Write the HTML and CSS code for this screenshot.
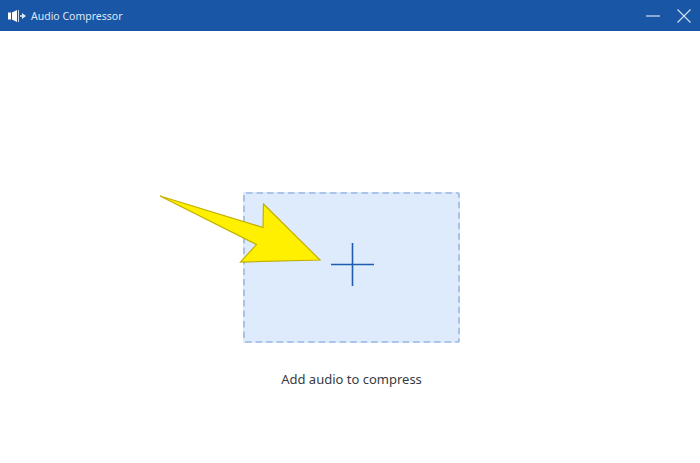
FILE: index.html
```html
<!DOCTYPE html>
<html>
<head>
    <title>Audio Compressor</title>
    <meta charset="UTF-8">
    <link rel="stylesheet" href="styles.css">
</head>
<body>
    <!-- Title bar -->
    <div class="title-bar">
        <svg class="app-icon" width="18" height="14" viewBox="0 0 18 14">
            <rect x="0" y="3.5" width="3" height="7" fill="#fff"/>
            <path d="M4 3.5 L9 1 L9 13 L4 10.5 Z" fill="#fff"/>
            <rect x="10" y="1" width="1" height="12" fill="#cfdcf0"/>
            <path d="M12 6.2 H14 V4 L18 7 L14 10 V7.8 H12 Z" fill="#dfe8f5"/>
        </svg>
        <span class="app-title">Audio Compressor</span>
        <div class="window-buttons">
            <svg width="14" height="14" viewBox="0 0 14 14">
                <path d="M0 7 H14" stroke="#b9cdea" stroke-width="1.4"/>
            </svg>
            <svg width="14" height="14" viewBox="0 0 14 14">
                <path d="M0.5 0.5 L13.5 13.5 M13.5 0.5 L0.5 13.5" stroke="#d5e1f2" stroke-width="1.1"/>
            </svg>
        </div>
    </div>

    <!-- Main area -->
    <div class="main">
        <div class="drop-zone">
            <svg class="dash-border" width="217" height="151" viewBox="0 0 217 151">
                <rect x="1" y="1" width="215" height="149" rx="2" fill="none" stroke="#9db8e2" stroke-width="1.6" stroke-dasharray="6.5 4"/>
            </svg>
            <svg class="plus" width="43" height="43" viewBox="0 0 43 43">
                <path d="M0 21.5 H43 M21.5 0 V43" stroke="#1f5cae" stroke-width="1.6"/>
            </svg>
        </div>
        <p class="add-label">Add audio to compress</p>
    </div>

    <!-- Arrow drawn over the page -->
    <svg class="arrow" width="700" height="463" viewBox="0 0 700 463">
        <path d="M160 196 L263 227.5 L263.5 204 L320 260 L240.5 262 L256.5 244.5 Z" fill="#fff000" stroke="#c4b000" stroke-width="1.2"/>
    </svg>
</body>
</html>
```

FILE: styles.css
```css
html, body {
    margin: 0;
    height: 463px;
    overflow: hidden;
    background: #fff;
    font-family: "Noto Sans", Tahoma, sans-serif;
}
.title-bar {
    display: flex;
    align-items: center;
    height: 31px;
    padding: 0 9px 0 8px;
    background: #1a56a6;
    color: #dde7f5;
    box-sizing: border-box;
}
.app-icon {
    margin-right: 5px;
}
.app-title {
    font-size: 10.5px;
}
.window-buttons {
    display: flex;
    gap: 17px;
    margin-left: auto;
}
.main {
    display: flex;
    flex-direction: column;
    align-items: center;
    padding-top: 161px;
}
.drop-zone {
    position: relative;
    display: flex;
    align-items: center;
    justify-content: center;
    width: 217px;
    height: 151px;
    margin-left: 3px;
    padding: 0 0 7px 1px;
    box-sizing: border-box;
    background: #deebfc;
}
.dash-border {
    position: absolute;
    left: 0;
    top: 0;
}
.add-label {
    margin: 26px 0 0 3px;
    font-size: 13px;
    line-height: 20px;
    color: #383c42;
}
.arrow {
    position: absolute;
    left: 0;
    top: 0;
    pointer-events: none;
}
```
